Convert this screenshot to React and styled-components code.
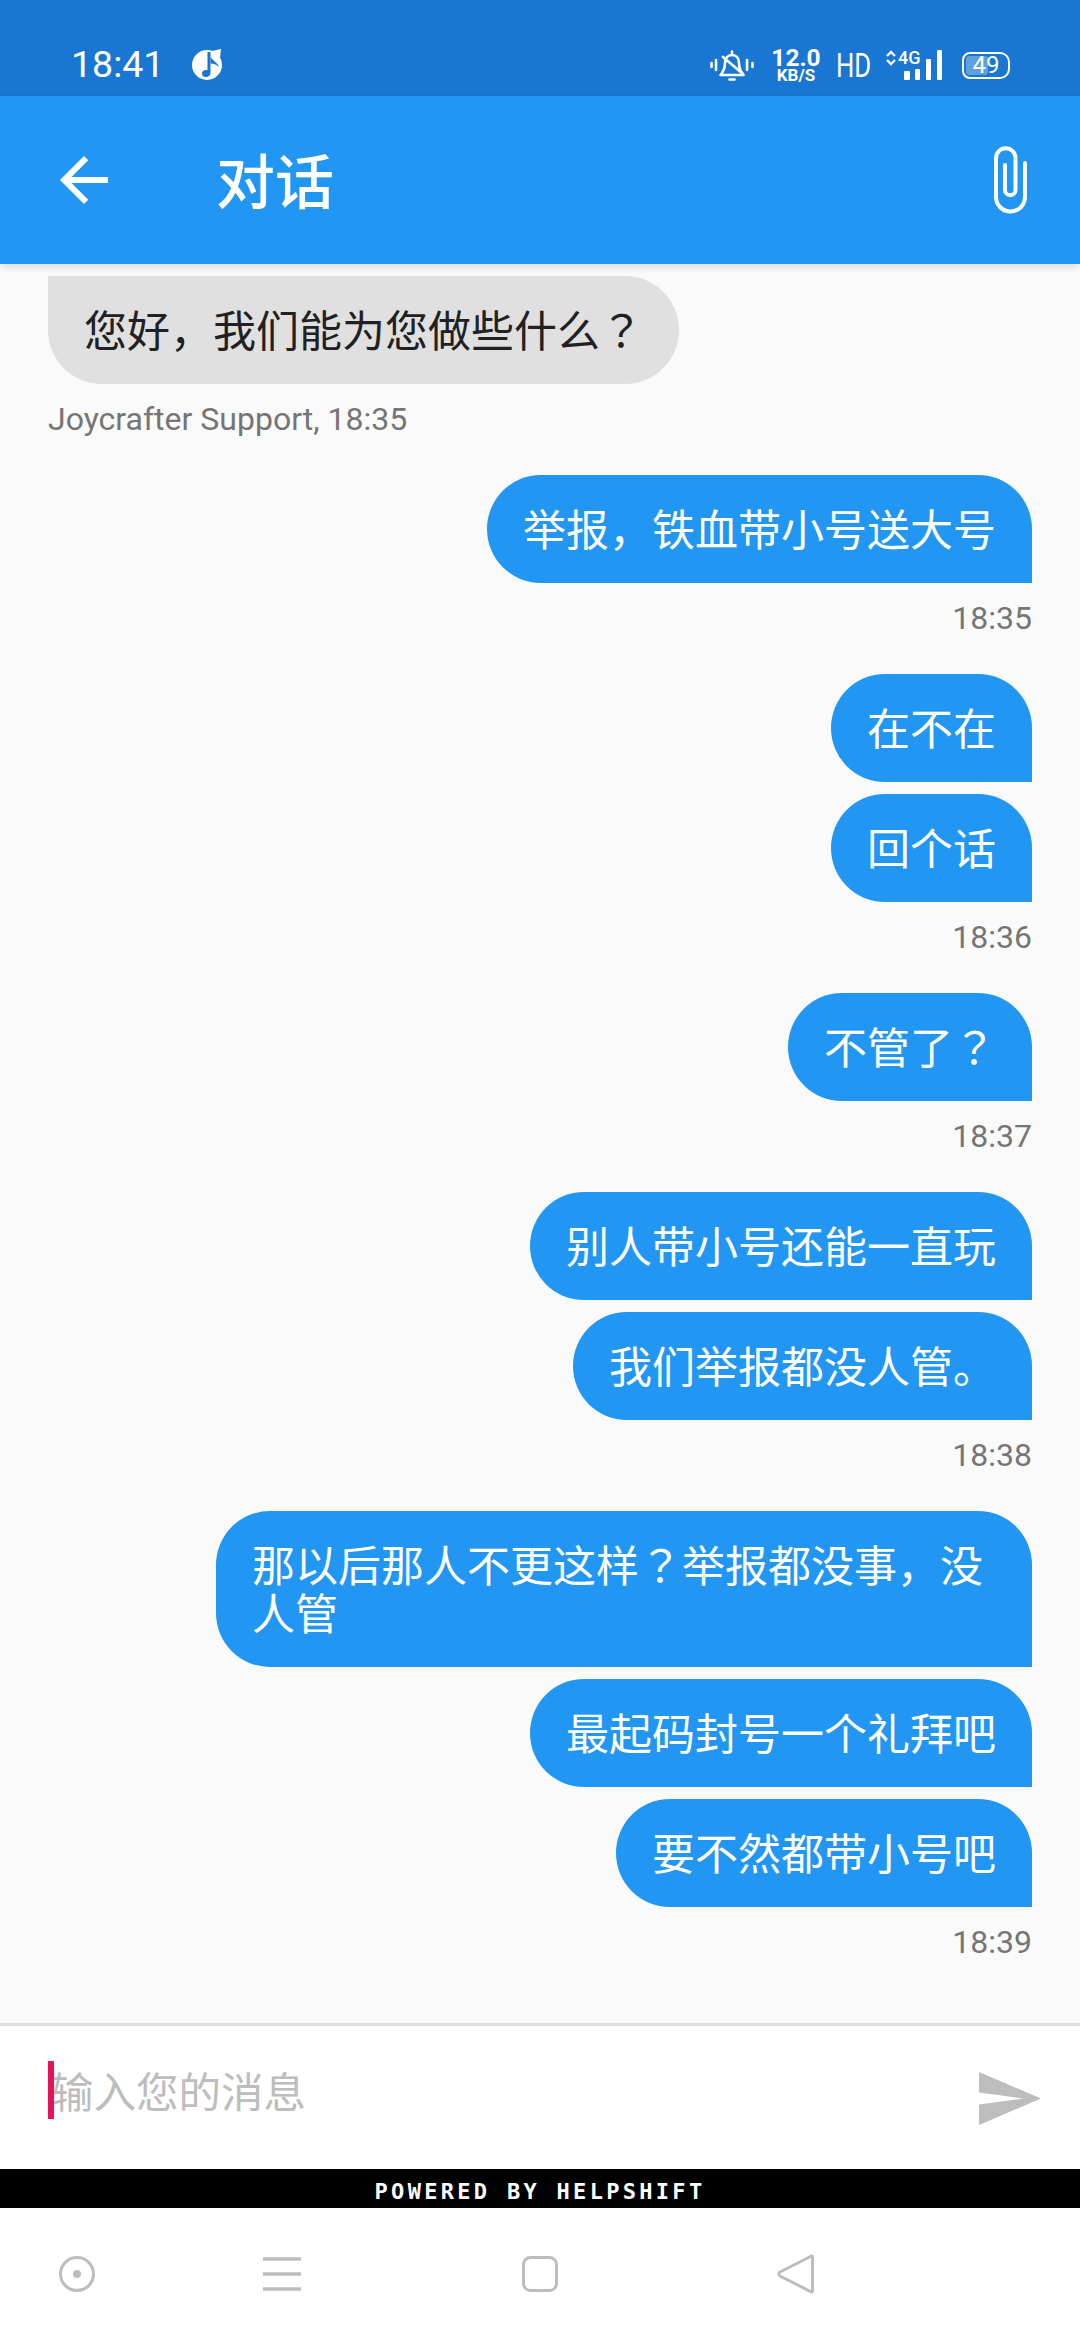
import styled, { createGlobalStyle } from 'styled-components'

const GlobalStyle = createGlobalStyle`
  html, body {
    margin: 0;
    padding: 0;
    background: #fafafa;
  }
  * {
    box-sizing: border-box;
  }
`

const CJK = `Roboto, "Noto Sans CJK SC", sans-serif`

const groups = [
  { time: '18:35', messages: ['举报，铁血带小号送大号'] },
  { time: '18:36', messages: ['在不在', '回个话'] },
  { time: '18:37', messages: ['不管了？'] },
  { time: '18:38', messages: ['别人带小号还能一直玩', '我们举报都没人管。'] },
  { time: '18:39', messages: ['那以后那人不更这样？举报都没事，没人管', '最起码封号一个礼拜吧', '要不然都带小号吧'] },
]

// the screenshot's font centers the full-width question mark, the SC cut does not
const withMarks = text =>
  text.split(/(？)/).map((part, i) => (part === '？' ? <Mark key={i}>？</Mark> : part))

export default function App() {
  return (
    <>
      <GlobalStyle />
      <Screen>
        <StatusBar>
          <Clock>18:41</Clock>
          <MusicIcon />
          <StatusRight>
            <BellIcon />
            <Speed>
              <SpeedValue>12.0</SpeedValue>
              <SpeedUnit>KB/S</SpeedUnit>
            </Speed>
            <HdBox><Hd>HD</Hd></HdBox>
            <Network>
              <ArrowsIcon />
              <FourG>4G</FourG>
              <SignalIcon />
            </Network>
            <Battery>
              <BatteryFill />
              <BatteryText>49</BatteryText>
            </Battery>
          </StatusRight>
        </StatusBar>
        <AppBar>
          <BackIcon />
          <Title>对话</Title>
          <ClipIcon />
        </AppBar>
        <Messages>
          <Received>{withMarks('您好，我们能为您做些什么？')}</Received>
          <Caption>Joycrafter Support, 18:35</Caption>
          {groups.map(group => (
            <Group key={group.time}>
              {group.messages.map(text => (
                <Sent key={text}>{withMarks(text)}</Sent>
              ))}
              <Time>{group.time}</Time>
            </Group>
          ))}
        </Messages>
        <Composer>
          <Caret />
          <Placeholder>输入您的消息</Placeholder>
          <SendIcon />
        </Composer>
        <Powered>POWERED BY HELPSHIFT</Powered>
        <NavBar>
          <NavSlot><NavCircle /></NavSlot>
          <NavSlot><NavMenu /></NavSlot>
          <NavSlot><NavSquare /></NavSlot>
          <NavSlot><NavBack /></NavSlot>
        </NavBar>
      </Screen>
    </>
  )
}

const MusicIcon = () => (
  <MusicSvg viewBox="0 0 32 32">
    <circle cx="15" cy="16" r="15" fill="#fff" />
    <path d="M20 2 L29 0 L28 9 Z" fill="#fff" />
    <path d="M15.500 3 L18.500 3 L18.500 24 C18.500 26.500 16.500 28 14 28 C11.500 28 10 26.500 10 24.500 C10 22.500 11.500 21 14 21 C14.500 21 15 21 15.500 21.200 Z" fill="#1976d2" />
    <path d="M18.500 8 C21 12 25 13 27 18 C24.500 15.500 21.500 14.500 18.500 14.500 Z" fill="#1976d2" />
  </MusicSvg>
)

const BellIcon = () => (
  <IconSvg width="44" height="31" viewBox="0 0 44 31">
    <g fill="none" stroke="#fff" strokeWidth="2.600" strokeLinecap="round" strokeLinejoin="round">
      <path d="M1.500 13v4M6 10v10M37 10v10M42.500 13v4" />
      <path d="M10.500 25 C14 21 15 18 15 13 C15 8 18 5 22 5 C26 5 29 8 29 13 C29 18 30 21 33.500 25 Z" />
      <path d="M22 1.500v3" />
      <path d="M13 7 L33 24" />
      <path d="M19.500 29.500h5" />
    </g>
  </IconSvg>
)

const ArrowsIcon = () => (
  <IconSvg width="10" height="16" viewBox="0 0 10 16">
    <path d="M1 6 L5 2 L9 6 M1 10 L5 14 L9 10" fill="none" stroke="#fff" strokeWidth="2.400" />
  </IconSvg>
)

const SignalIcon = () => (
  <SignalSvg width="38" height="30" viewBox="0 0 38 30">
    <rect x="0" y="21" width="6" height="9" rx="1" fill="#fff" />
    <rect x="11" y="19" width="5" height="11" rx="1" fill="#fff" />
    <rect x="22" y="9" width="5" height="21" rx="1" fill="#fff" />
    <rect x="33" y="0" width="5" height="30" rx="1" fill="#fff" />
  </SignalSvg>
)

const BackIcon = () => (
  <BackSvg viewBox="0 0 24 24">
    <path d="M20 11H7.830l5.590-5.590L12 4l-8 8 8 8 1.410-1.410L7.830 13H20v-2z" fill="#fff" />
  </BackSvg>
)

const ClipIcon = () => (
  <ClipSvg viewBox="20 10 36 70">
    <path
      d="M33 30 V55 A5.250 5.250 0 0 0 43.500 55 V23 A9.750 9.750 0 0 0 24 23 V62 A14.500 14.500 0 0 0 53 62 V28"
      fill="none"
      stroke="#fff"
      strokeWidth="4"
      strokeLinecap="round"
    />
  </ClipSvg>
)

const SendIcon = () => (
  <SendSvg viewBox="0 0 21 18">
    <path d="M0.010 18 L21 9 L0.010 0 L0 7 L15 9 L0 11 Z" fill="#bdbdbd" />
  </SendSvg>
)

const NavCircle = () => (
  <IconSvg width="36" height="36" viewBox="0 0 36 36">
    <circle cx="18" cy="18" r="16.500" fill="none" stroke="#bdbdbd" strokeWidth="3" />
    <circle cx="18" cy="18" r="4" fill="#bdbdbd" />
  </IconSvg>
)

const NavMenu = () => (
  <IconSvg width="38" height="34" viewBox="0 0 38 34">
    <path d="M0 2h38M0 17h38M0 32h38" stroke="#bdbdbd" strokeWidth="3.500" />
  </IconSvg>
)

const NavSquare = () => (
  <IconSvg width="36" height="36" viewBox="0 0 36 36">
    <rect x="1.500" y="1.500" width="33" height="33" rx="7" fill="none" stroke="#bdbdbd" strokeWidth="3" />
  </IconSvg>
)

const NavBack = () => (
  <IconSvg width="38" height="40" viewBox="0 0 38 40">
    <path d="M35.500 3 C35.500 2 34.500 1.500 33.500 2.500 L3 18 C1.500 19 1.500 21 3 22 L33.500 37.500 C34.500 38.500 35.500 38 35.500 37 Z" fill="none" stroke="#bdbdbd" strokeWidth="3" strokeLinejoin="round" />
  </IconSvg>
)

const Screen = styled.div`
  width: 1080px;
  height: 2340px;
  display: flex;
  flex-direction: column;
  overflow: hidden;
  background: #fafafa;
  font-family: ${CJK};
`

const StatusBar = styled.div`
  height: 96px;
  flex: none;
  display: flex;
  align-items: center;
  padding: 34px 70px 0 71px;
  background: #1976d2;
  color: #fff;
`

const Clock = styled.span`
  font-size: 37.500px;
  font-weight: 400;
  line-height: 1;
`

const MusicSvg = styled.svg`
  width: 32px;
  height: 32px;
  margin-left: 28px;
`

const IconSvg = styled.svg`
  display: block;
  flex: none;
`

const StatusRight = styled.div`
  margin-left: auto;
  display: flex;
  align-items: center;
`

const Speed = styled.div`
  width: 48px;
  display: flex;
  flex-direction: column;
  align-items: center;
  margin-left: 18px;
  font-weight: 700;
`

const SpeedValue = styled.span`
  font-size: 24.500px;
  line-height: 21px;
`

const SpeedUnit = styled.span`
  font-size: 17px;
  line-height: 15px;
`

const HdBox = styled.div`
  width: 35px;
  margin-left: 16px;
`

const Hd = styled.span`
  display: block;
  font-size: 33px;
  font-weight: 400;
  line-height: 1;
  transform: scaleX(0.78);
  transform-origin: left center;
`

const Network = styled.div`
  display: flex;
  align-items: flex-start;
  margin-left: 15px;
  position: relative;
  height: 30px;
  width: 56px;
`

const FourG = styled.span`
  position: absolute;
  left: 12px;
  top: -1px;
  font-size: 18px;
  font-weight: 500;
  line-height: 18px;
`

const SignalSvg = styled.svg`
  position: absolute;
  right: 0;
  top: 0;
`

const Battery = styled.div`
  position: relative;
  width: 48px;
  height: 27px;
  margin-left: 20px;
  border: 2.500px solid #fff;
  border-radius: 8px 10px 10px 8px;
  overflow: hidden;
  display: flex;
  align-items: center;
  justify-content: center;
`

const BatteryFill = styled.div`
  position: absolute;
  left: 2px;
  top: 2px;
  bottom: 2px;
  width: 49%;
  border-radius: 3px;
  background: rgba(255, 255, 255, 0.3);
`

const BatteryText = styled.span`
  position: relative;
  font-size: 24px;
  font-weight: 400;
  line-height: 1;
`

const AppBar = styled.div`
  position: relative;
  z-index: 1;
  height: 168px;
  flex: none;
  display: flex;
  align-items: center;
  padding: 0 52px 0 48px;
  background: #2196f3;
  color: #fff;
  box-shadow: 0 3px 8px rgba(0, 0, 0, 0.12);
`

const BackSvg = styled.svg`
  width: 72px;
  height: 72px;
  flex: none;
`

const Title = styled.div`
  margin-left: 96px;
  padding-top: 6px;
  font-size: 59px;
  font-weight: 500;
  line-height: 1;
`

const ClipSvg = styled.svg`
  width: 36px;
  height: 70px;
  margin-left: auto;
`

const Messages = styled.div`
  flex: 1;
  display: flex;
  flex-direction: column;
  padding: 12px 48px 0;
`

const Bubble = styled.div`
  padding: 32px 36px 28px;
  font-size: 43px;
  line-height: 48px;
  max-width: 816px;
`

const Mark = styled.span`
  font-family: "Noto Sans CJK TC", sans-serif;
  line-height: 0;
`

const Received = styled(Bubble)`
  align-self: flex-start;
  background: #e0e0e0;
  color: #212121;
  border-radius: 0 54px 54px 54px;
`

const Sent = styled(Bubble)`
  align-self: flex-end;
  background: #2196f3;
  color: #fff;
  border-radius: 54px 54px 0 54px;
`

const Caption = styled.div`
  margin-top: 17px;
  font-size: 32px;
  line-height: 37px;
  color: #757575;
`

const Group = styled.div`
  display: flex;
  flex-direction: column;
  gap: 12px;
  margin-top: 37px;
`

const Time = styled.div`
  align-self: flex-end;
  margin-top: 5px;
  font-size: 32px;
  line-height: 37px;
  color: #757575;
`

const Composer = styled.div`
  position: relative;
  height: 146px;
  flex: none;
  display: flex;
  align-items: center;
  padding: 0 39px 0 51px;
  background: #fff;
  border-top: 3px solid #e0e0e0;
`

const Caret = styled.div`
  position: absolute;
  left: 48px;
  top: 35px;
  width: 6px;
  height: 58px;
  background: #e8125c;
`

const Placeholder = styled.div`
  font-size: 42.500px;
  line-height: 48px;
  color: #bdbdbd;
  margin-bottom: 8px;
`

const SendSvg = styled.svg`
  width: 62px;
  height: 53px;
  margin-left: auto;
  margin-top: 2px;
`

const Powered = styled.div`
  height: 39px;
  flex: none;
  padding-top: 4px;
  background: #000;
  color: #fff;
  text-align: center;
  font-family: "DejaVu Sans Mono", monospace;
  font-size: 22px;
  font-weight: 700;
  line-height: 37px;
  letter-spacing: 3.300px;
  white-space: nowrap;
  overflow: hidden;
`

const NavBar = styled.div`
  height: 132px;
  flex: none;
  display: grid;
  grid-template-columns: 154px 256px 260px 252px;
  align-items: center;
  background: #fff;
`

const NavSlot = styled.div`
  display: flex;
  justify-content: center;
`
